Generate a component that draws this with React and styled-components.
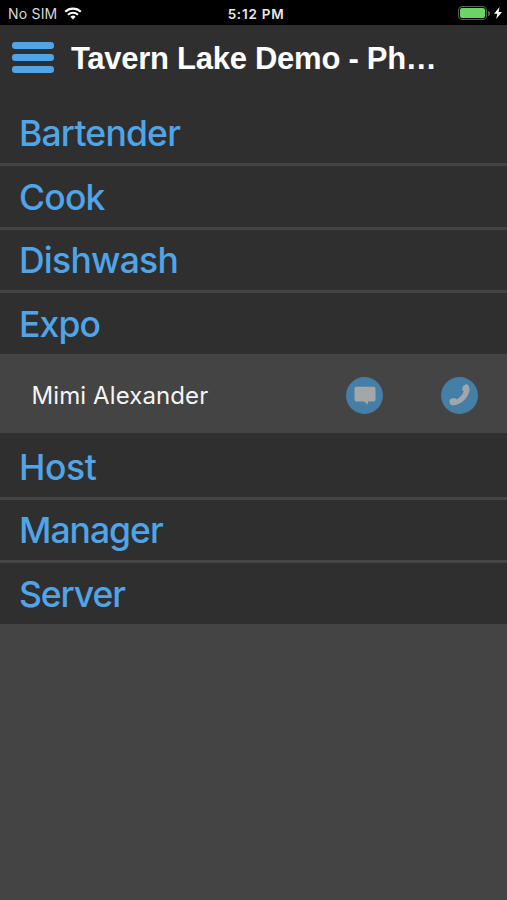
import { useState } from "react";
import styled, { createGlobalStyle } from "styled-components";

const departments = [
    { name: "Bartender", people: [], spacing: "-0.8px" },
    { name: "Cook", people: [], spacing: "-0.8px" },
    { name: "Dishwash", people: [], spacing: "-0.75px" },
    { name: "Expo", people: ["Mimi Alexander"], spacing: "-0.9px" },
    { name: "Host", people: [], spacing: "-0.4px" },
    { name: "Manager", people: [], spacing: "-1px" },
    { name: "Server", people: [], spacing: "-1.1px" },
];

const App = () => {
    const [open, setOpen] = useState("Expo");

    return (
        <>
            <GlobalStyle />
            <Screen>
                <StatusBar>
                    <Carrier>
                        No SIM
                        <svg width="18" height="13" viewBox="0 0 18 13" fill="none" stroke="#fff" strokeWidth="2.1">
                            <path d="M1.2 4.7a11.3 11.3 0 0 1 15.6 0" />
                            <path d="M4 7.7a7.2 7.2 0 0 1 10 0" />
                            <path d="M9 12.4 6.4 9.8a3.7 3.7 0 0 1 5.2 0Z" fill="#fff" stroke="none" />
                        </svg>
                    </Carrier>
                    <Clock>5:12 PM</Clock>
                    <Power>
                        <Battery>
                            <Charge />
                        </Battery>
                        <BatteryTip />
                        <svg width="8" height="12" viewBox="0 0 8 12" fill="#fff">
                            <path d="M5.6 0 0 6.7h3.3L2.2 12 8 5H4.6Z" />
                        </svg>
                    </Power>
                </StatusBar>
                <Header>
                    <MenuButton aria-label="Menu">
                        <MenuLine />
                        <MenuLine />
                        <MenuLine />
                    </MenuButton>
                    <Title>Tavern Lake Demo - Ph…</Title>
                </Header>
                <List>
                    {departments.map((department) => {
                        const expanded = open === department.name && department.people.length > 0;
                        return (
                            <Group key={department.name} $expanded={expanded}>
                                <Department
                                    $spacing={department.spacing}
                                    onClick={() => setOpen(expanded ? null : department.name)}
                                >
                                    {department.name}
                                </Department>
                                {expanded && department.people.map((person) => (
                                    <Contact key={person}>
                                        <Person>{person}</Person>
                                        <Actions>
                                            <RoundButton aria-label="Message">
                                                <svg width="22" height="19" viewBox="0 0 22 19" fill="#a4a7aa">
                                                    <path d="M2.4.8h17.2a1.9 1.9 0 0 1 1.9 1.9v10.9a1.9 1.9 0 0 1-1.9 1.9H14v3L9.8 15.5H2.4A1.9 1.9 0 0 1 .5 13.6V2.7A1.9 1.9 0 0 1 2.4.8Z" />
                                                </svg>
                                            </RoundButton>
                                            <RoundButton aria-label="Call">
                                                <svg width="22" height="22" viewBox="0 0 22 22" fill="#a4a7aa">
                                                    <path d="M14.3 2 16.6.5c.8-.5 1.9-.3 2.4.5 1.2 1.7 1.9 4 1.3 6.3-1.5 6-5.8 10.8-11.6 13-2.1.9-4.6 1.3-6.6.6-.8-.3-1.2-1-1.3-1.8L.5 16.6c-.1-.8.4-1.5 1.1-1.7l3.4-.9c.6-.2 1.2 0 1.6.5l.9 1c3.2-1.8 5.9-4.7 7.3-8l-1.1-1c-.4-.4-.6-1-.4-1.6l.4-2.1c.1-.3.3-.6.6-.8Z" />
                                                </svg>
                                            </RoundButton>
                                        </Actions>
                                    </Contact>
                                ))}
                            </Group>
                        );
                    })}
                </List>
            </Screen>
        </>
    );
};

const GlobalStyle = createGlobalStyle`
    * {
        box-sizing: border-box;
    }
    body {
        margin: 0;
        background: #444;
    }
    button {
        border: none;
        padding: 0;
        cursor: pointer;
    }
`

const Screen = styled.div`
    min-height: 100vh;
    background: #444;
    color: #fff;
    font-family: Inter, "Liberation Sans", sans-serif;
    overflow: hidden;
`

const StatusBar = styled.div`
    display: grid;
    grid-template-columns: 1fr auto 1fr;
    align-items: center;
    height: 25px;
    padding: 2px 5px 0 8px;
    background: #000;
    font-size: 13.5px;
    line-height: 20px;
`

const Carrier = styled.div`
    display: flex;
    align-items: center;
    gap: 7px;
    color: #d8d8d8;
    font-size: 14px;
    letter-spacing: 0.2px;
`

const Clock = styled.div`
    margin-left: 2px;
    font-weight: 600;
    letter-spacing: 0.75px;
    color: #e8e8e8;
`

const Power = styled.div`
    display: flex;
    align-items: center;
    justify-content: flex-end;
    padding-bottom: 1px;
`

const Battery = styled.div`
    width: 29px;
    height: 14px;
    padding: 1px;
    border: 1px solid #5c5c5c;
    border-radius: 4px;
`

const Charge = styled.div`
    height: 10px;
    border-radius: 2px;
    background: #6bd465;
`

const BatteryTip = styled.div`
    width: 2px;
    height: 5px;
    margin: 0 4px 0 1px;
    border-radius: 0 2px 2px 0;
    background: #5c5c5c;
`

const Header = styled.header`
    display: flex;
    align-items: flex-start;
    height: 77.5px;
    padding: 15px 12px 0;
    gap: 17px;
    background: #2f2f2f;
`

const MenuButton = styled.button`
    display: flex;
    flex-direction: column;
    gap: 5.4px;
    width: 42px;
    margin-top: 2.4px;
    background: none;
`

const MenuLine = styled.span`
    height: 6.6px;
    border-radius: 3.3px;
    background: #4fa5e8;
`

const Title = styled.h1`
    margin: 0;
    font-family: "Liberation Sans", Arial, sans-serif;
    font-size: 31px;
    font-weight: 700;
    line-height: 37px;
    letter-spacing: -0.27px;
    white-space: nowrap;
`

const List = styled.div`
    display: flex;
    flex-direction: column;
`

// the dark strip under an open group belongs to the next row
const Group = styled.section`
    border-bottom: 3px solid ${({ $expanded }) => ($expanded ? "#2f2f2f" : "#444")};
`

const Department = styled.div`
    display: flex;
    align-items: center;
    height: 60.5px;
    padding: 1.5px 19px 0;
    background: #2f2f2f;
    color: #4fa5e8;
    font-size: 35.5px;
    font-weight: 550;
    letter-spacing: ${({ $spacing }) => $spacing};
    cursor: pointer;
`

const Contact = styled.div`
    display: flex;
    align-items: center;
    justify-content: space-between;
    height: 79.5px;
    padding: 4px 29px 0 31.5px;
`

const Person = styled.div`
    color: #f4f4f4;
    font-size: 24px;
    letter-spacing: 0.1px;
`

const Actions = styled.div`
    display: flex;
    gap: 58px;
`

const RoundButton = styled.button`
    display: flex;
    align-items: center;
    justify-content: center;
    width: 37px;
    height: 37px;
    border-radius: 50%;
    background: #457fa6;
`

export default App;
